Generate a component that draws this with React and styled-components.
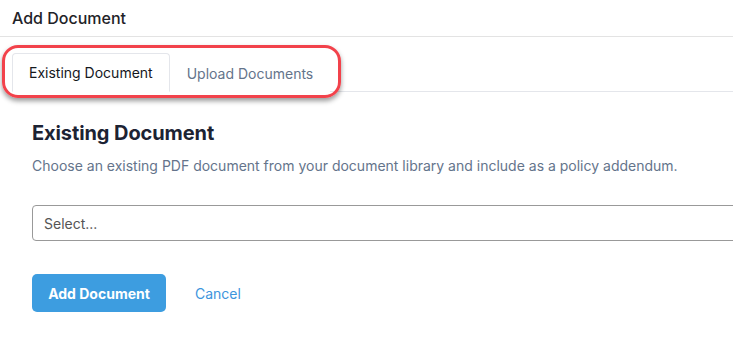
import React from "react";
import styled, { createGlobalStyle } from "styled-components";

const Global = createGlobalStyle`
  html, body { margin: 0; padding: 0; background: #fff; }
  body { font-family: Inter, "Noto Sans", Arial, sans-serif; overflow: hidden; }
  * { box-sizing: border-box; }
`;

const Page = styled.div`
  position: relative;
  width: 733px;
  height: 341px;
  overflow: hidden;
`;

const Header = styled.div`
  height: 37px;
  display: flex;
  align-items: center;
  padding: 0 12px 1px;
  border-bottom: 1px solid #e3e3e3;
  font-size: 16px;
  font-weight: 500;
  color: #1f2328;
`;

const TabList = styled.div`
  display: flex;
  margin: 16px 0 0 12px;
  border-bottom: 1px solid #e4e6eb;
  height: 39px;
`;

const Tab = styled.div`
  height: 39px;
  padding: 0 16px;
  display: flex;
  align-items: center;
  font-size: 14px;
  color: ${(p) => (p.$active ? "#15181d" : "#64748b")};
  background: #fff;
  border: 1px solid ${(p) => (p.$active ? "#e4e6eb" : "transparent")};
  border-bottom: ${(p) => (p.$active ? "1px solid #fff" : "none")};
  border-radius: 4px 4px 0 0;
  margin-bottom: ${(p) => (p.$active ? "-1px" : "0")};
`;

const Highlight = styled.div`
  position: absolute;
  left: 2px;
  top: 45px;
  width: 339px;
  height: 53px;
  border: 3.5px solid #f2424b;
  border-radius: 16px;
  box-shadow: 0 3px 5px rgba(0, 0, 0, 0.4);
  pointer-events: none;
`;

const Content = styled.div`
  padding: 29px 0 0 32px;
`;

const Title = styled.h2`
  margin: 0;
  font-size: 20px;
  font-weight: 700;
  color: #1c2333;
  line-height: 24px;
  letter-spacing: -0.1px;
`;

const Description = styled.p`
  margin: 12px 0 0;
  font-size: 14px;
  color: #64748b;
  line-height: 18px;
`;

const SelectBox = styled.div`
  margin-top: 30px;
  width: 720px;
  height: 36px;
  border: 1px solid #999;
  border-radius: 4px;
  display: flex;
  align-items: center;
  padding: 0 11px;
  font-size: 14px;
  color: #555;
`;

const Actions = styled.div`
  display: flex;
  align-items: center;
  gap: 29px;
  margin-top: 33px;
`;

const PrimaryButton = styled.button`
  height: 38px;
  width: 134px;
  border: none;
  border-radius: 5px;
  background: #3d9de0;
  color: #fff;
  font-family: inherit;
  font-size: 14px;
  font-weight: 700;
`;

const LinkButton = styled.button`
  border: none;
  background: none;
  padding: 0;
  font-family: inherit;
  font-size: 14px;
  color: #3d95dd;
`;

export default function App() {
  return (
    <Page>
      <Global />
      <Header>Add Document</Header>
      <TabList>
        <Tab $active>Existing Document</Tab>
        <Tab>Upload Documents</Tab>
      </TabList>
      <Highlight />
      <Content>
        <Title>Existing Document</Title>
        <Description>
          Choose an existing PDF document from your document library and include as a policy addendum.
        </Description>
        <SelectBox>Select...</SelectBox>
        <Actions>
          <PrimaryButton>Add Document</PrimaryButton>
          <LinkButton>Cancel</LinkButton>
        </Actions>
      </Content>
    </Page>
  );
}
